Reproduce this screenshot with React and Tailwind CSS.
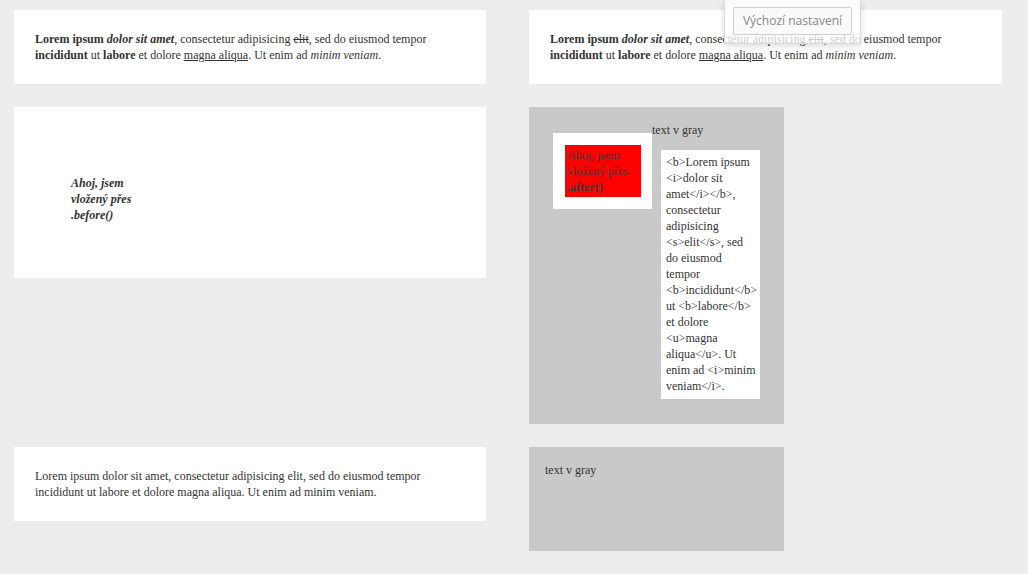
import React from "react";

const serif = { fontFamily: '"Liberation Serif", "Times New Roman", serif' };

function RichText() {
  return (
    <p>
      <b>Lorem ipsum</b> <b><i>dolor sit amet</i></b>, consectetur adipisicing <s>elit</s>, sed do eiusmod tempor{" "}
      <b>incididunt</b> ut <b>labore</b> et dolore <u>magna aliqua</u>. Ut enim ad <i>minim veniam</i>.
    </p>
  );
}

export default function App() {
  return (
    <div
      className="relative min-h-[574px] w-full bg-[#ededed] text-[12px] leading-[16px] text-[#333]"
      style={serif}
    >
      <div className="grid grid-cols-[472px_473px] items-start gap-x-[43px] gap-y-[23px] pl-[14px] pt-[10px]">
        {/* ROW 1 */}
        <div className="h-[74px] bg-white px-[21px] py-[21px]">
          <RichText />
        </div>
        <div className="h-[74px] bg-white px-[21px] py-[21px]">
          <RichText />
        </div>

        {/* ROW 2 */}
        <div className="h-[171px] bg-white pl-[57px] pt-[68px]">
          <p className="w-[80px] font-bold italic">Ahoj, jsem vložený přes .before()</p>
        </div>
        <div className="flex w-[255px] items-start bg-[#c9c9c9] pb-[25px] pl-[24px] pt-[15px]">
          <div className="mt-[11px] bg-white py-[12px] pl-[12px] pr-[11px]">
            <div className="h-[52px] w-[76px] bg-[#ff0000] p-[2px] text-[#3a3a3a]">
              Ahoj, jsem vložený přes <b>.after()</b>
            </div>
          </div>
          <div className="flex flex-col">
            <span>text v gray</span>
            <div className="ml-[9px] mt-[12px] w-[99px] bg-white pb-[5px] pl-[5px] pr-[2px] pt-[4px]">
              {"<b>Lorem ipsum <i>dolor sit amet</i></b>, consectetur adipisicing <s>elit</s>, sed do eiusmod tempor <b>incididunt</b> ut <b>labore</b> et dolore <u>magna aliqua</u>. Ut enim ad <i>minim veniam</i>."}
            </div>
          </div>
        </div>

        {/* ROW 3 */}
        <div className="h-[74px] bg-white px-[21px] py-[21px]">
          <p>
            Lorem ipsum dolor sit amet, consectetur adipisicing elit, sed do eiusmod tempor incididunt ut labore et
            dolore magna aliqua. Ut enim ad minim veniam.
          </p>
        </div>
        <div className="h-[104px] w-[255px] bg-[#c9c9c9] pl-[16px] pt-[15px]">text v gray</div>
      </div>

      {/* settings popup */}
      <div className="absolute left-[724px] top-0 w-[137px] border border-t-0 border-[#dcdcdc] bg-white/75 pb-[8px] pl-[8px] pr-[8px] pt-[7px] shadow-[0_2px_6px_rgba(0,0,0,0.15)]">
        <button
          className="h-[28px] w-[119px] rounded-[2px] border border-[#cfcfcf] bg-[#fafafa] text-[12px] text-[#888]"
          style={{ fontFamily: '"Open Sans", "Noto Sans", sans-serif' }}
        >
          Výchozí nastavení
        </button>
      </div>
    </div>
  );
}
